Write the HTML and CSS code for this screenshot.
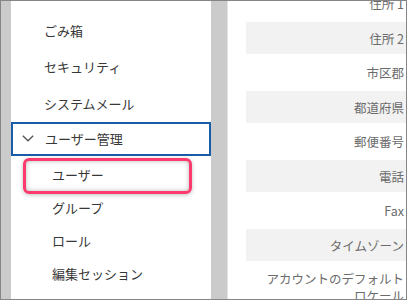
FILE: index.html
```html
<!DOCTYPE html>
<html lang="ja">
<head>
<meta charset="utf-8">
<link rel="stylesheet" href="styles.css">
</head>
<body>
<div class="frame">
  <div class="gutter"></div>
  <nav class="sidebar">
    <div class="item">ごみ箱</div>
    <div class="item">セキュリティ</div>
    <div class="item">システムメール</div>
    <div class="item group">
      <svg class="chev" width="12" height="7" viewBox="0 0 12 7"><polyline points="0.8,0.8 6,5.8 11.2,0.8" fill="none" stroke="#555" stroke-width="1.3"/></svg>
      <span>ユーザー管理</span>
    </div>
    <div class="sub">
      <div class="subitem current">ユーザー<span class="highlight"></span></div>
      <div class="subitem">グループ</div>
      <div class="subitem">ロール</div>
      <div class="subitem">編集セッション</div>
    </div>
  </nav>
  <div class="divider"></div>
  <main class="content">
    <div class="rows">
      <div class="row">住所 1</div>
      <div class="row alt">住所 2</div>
      <div class="row">市区郡</div>
      <div class="row alt">都道府県</div>
      <div class="row">郵便番号</div>
      <div class="row alt">電話</div>
      <div class="row">Fax</div>
      <div class="row alt">タイムゾーン</div>
      <div class="row wrap">アカウントのデフォルト ロケール</div>
    </div>
  </main>
</div>
</body>
</html>
```
FILE: styles.css
```css
html, body {
  margin: 0;
  padding: 0;
  background: #ffffff;
}
body {
  font-family: "Noto Sans CJK JP", "Noto Sans", sans-serif;
  font-size: 13px;
}
.frame {
  box-sizing: border-box;
  width: 407px;
  height: 300px;
  border: 1px solid #858585;
  display: flex;
  overflow: hidden;
}
.gutter {
  width: 10px;
  flex: none;
  background: #cbcbcb;
}
.sidebar {
  width: 200px;
  flex: none;
  background: #fff;
  padding-top: 11px;
  color: #383838;
}
.item {
  height: 36.67px;
  display: flex;
  align-items: center;
  padding-left: 33px;
  white-space: nowrap;
}
.item.group {
  box-sizing: border-box;
  height: 34px;
  border: 2px solid #1a5ca8;
  padding-left: 9px;
  gap: 11px;
}
.chev {
  flex: none;
}
.sub {
  padding-top: 2.5px;
}
.subitem {
  position: relative;
  height: 33px;
  display: flex;
  align-items: center;
  padding-left: 41px;
}
.highlight {
  position: absolute;
  left: 12px;
  top: -0.5px;
  width: 169px;
  height: 36px;
  box-sizing: border-box;
  border: 3px solid #fc3a6d;
  border-radius: 6px;
  box-shadow: inset 0 0 5px rgba(0, 0, 0, 0.28), 0 1px 4px rgba(0, 0, 0, 0.25);
}
.divider {
  width: 16px;
  flex: none;
  background: #cbcbcb;
  border-right: 1px solid #e4e4e4;
}
.content {
  box-sizing: border-box;
  width: 178px;
  flex: none;
  padding-left: 18px;
  overflow: hidden;
  color: #6b6b6b;
  font-size: 12.5px;
}
.rows {
  width: 100%;
  margin-top: -16px;
}
.row {
  box-sizing: border-box;
  width: 100%;
  height: 37px;
  display: flex;
  align-items: center;
  justify-content: flex-end;
  padding-right: 2px;
  white-space: nowrap;
}
.row.alt {
  height: 32px;
  background: #f2f2f2;
}
.row.wrap {
  height: auto;
  display: block;
  text-align: right;
  white-space: normal;
  word-break: keep-all;
  line-height: 17px;
  padding-top: 8.5px;
}
```
